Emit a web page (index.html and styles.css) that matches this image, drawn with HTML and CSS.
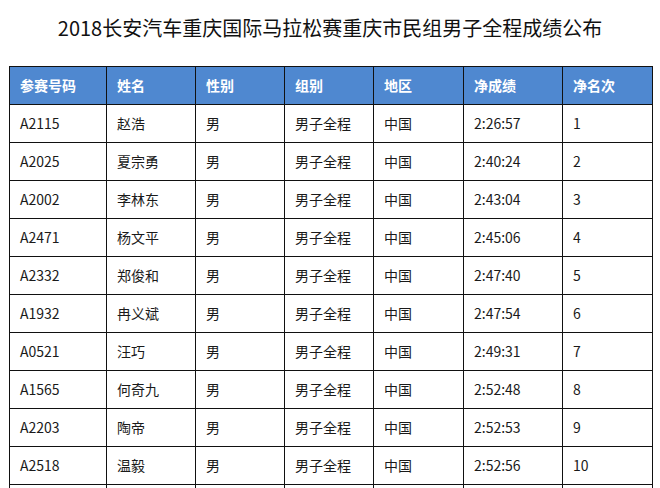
FILE: index.html
```html
<!DOCTYPE html>
<html lang="zh-CN">
<head>
<meta charset="utf-8">
<title>2018长安汽车重庆国际马拉松赛重庆市民组男子全程成绩公布</title>
<link rel="stylesheet" href="styles.css">
</head>
<body>
<div class="page">
  <h1 class="title">2018长安汽车重庆国际马拉松赛重庆市民组男子全程成绩公布</h1>
  <table class="results">
    <colgroup>
      <col class="c1"><col class="c2"><col class="c3"><col class="c4"><col class="c5"><col class="c6"><col class="c7">
    </colgroup>
    <thead>
      <tr><th>参赛号码</th><th>姓名</th><th>性别</th><th>组别</th><th>地区</th><th>净成绩</th><th>净名次</th></tr>
    </thead>
    <tbody>
      <tr><td>A2115</td><td>赵浩</td><td>男</td><td>男子全程</td><td>中国</td><td>2:26:57</td><td>1</td></tr>
      <tr><td>A2025</td><td>夏宗勇</td><td>男</td><td>男子全程</td><td>中国</td><td>2:40:24</td><td>2</td></tr>
      <tr><td>A2002</td><td>李林东</td><td>男</td><td>男子全程</td><td>中国</td><td>2:43:04</td><td>3</td></tr>
      <tr><td>A2471</td><td>杨文平</td><td>男</td><td>男子全程</td><td>中国</td><td>2:45:06</td><td>4</td></tr>
      <tr><td>A2332</td><td>郑俊和</td><td>男</td><td>男子全程</td><td>中国</td><td>2:47:40</td><td>5</td></tr>
      <tr><td>A1932</td><td>冉义斌</td><td>男</td><td>男子全程</td><td>中国</td><td>2:47:54</td><td>6</td></tr>
      <tr><td>A0521</td><td>汪巧</td><td>男</td><td>男子全程</td><td>中国</td><td>2:49:31</td><td>7</td></tr>
      <tr><td>A1565</td><td>何奇九</td><td>男</td><td>男子全程</td><td>中国</td><td>2:52:48</td><td>8</td></tr>
      <tr><td>A2203</td><td>陶帝</td><td>男</td><td>男子全程</td><td>中国</td><td>2:52:53</td><td>9</td></tr>
      <tr><td>A2518</td><td>温毅</td><td>男</td><td>男子全程</td><td>中国</td><td>2:52:56</td><td>10</td></tr>
      <tr><td></td><td></td><td></td><td></td><td></td><td></td><td></td></tr>
    </tbody>
  </table>
</div>
</body>
</html>
```

FILE: styles.css
```css
html, body {
  margin: 0;
  padding: 0;
  background: #ffffff;
}
body {
  font-family: "Noto Sans CJK SC", "Noto Sans", sans-serif;
  color: #1a1a1a;
  overflow: hidden;
}
.page {
  padding: 14px 0 0 9px;
}
.title {
  margin: 0 0 25px -9px;
  width: 660px;
  text-align: center;
  font-size: 20px;
  font-weight: normal;
  line-height: 27px;
  color: #111111;
}
.results {
  border-collapse: collapse;
  table-layout: fixed;
  width: 644px;
  font-size: 14px;
}
.c1 { width: 97px; }
.c2 { width: 89px; }
.c3 { width: 89px; }
.c4 { width: 89px; }
.c5 { width: 90px; }
.c6 { width: 99px; }
.c7 { width: 90px; }
.results tr {
  height: 38px;
}
.results th,
.results td {
  border: 1px solid #111111;
  padding: 0 10px 2px 10px;
  text-align: left;
  vertical-align: middle;
  line-height: 20px;
  white-space: nowrap;
}
.results th {
  background: #4f88d0;
  color: #ffffff;
  font-weight: bold;
}
.results td {
  color: #1a1a1a;
}
```
